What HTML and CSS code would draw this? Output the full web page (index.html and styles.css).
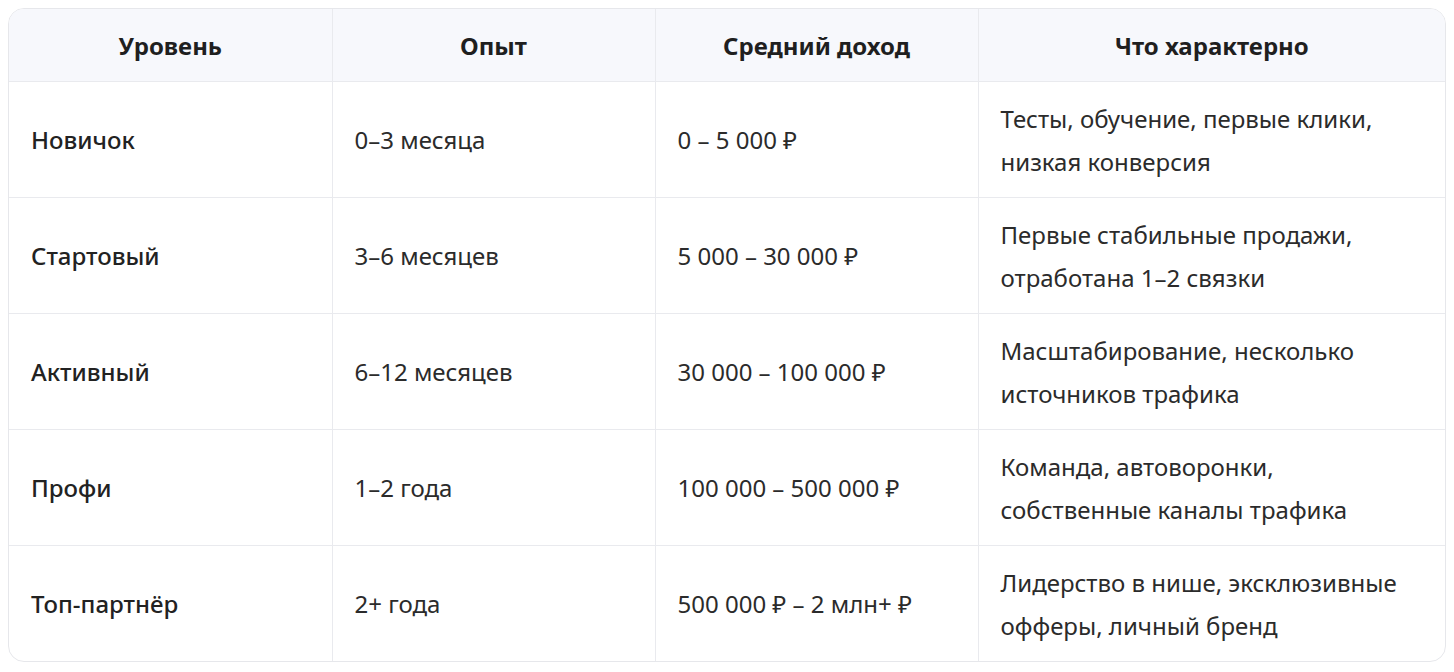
FILE: index.html
```html
<!DOCTYPE html>
<html lang="ru">
<head>
<meta charset="utf-8">
<link rel="stylesheet" href="styles.css">
</head>
<body>
<div class="wrap">
<table class="tbl">
<colgroup>
<col class="c1"><col class="c2"><col class="c3"><col class="c4">
</colgroup>
<thead>
<tr><th>Уровень</th><th>Опыт</th><th>Средний доход</th><th>Что характерно</th></tr>
</thead>
<tbody>
<tr><td class="lvl">Новичок</td><td>0–3 месяца</td><td>0 – 5 000 ₽</td><td>Тесты, обучение, первые клики,<br>низкая конверсия</td></tr>
<tr><td class="lvl">Стартовый</td><td>3–6 месяцев</td><td>5 000 – 30 000 ₽</td><td>Первые стабильные продажи,<br>отработана 1–2 связки</td></tr>
<tr><td class="lvl">Активный</td><td>6–12 месяцев</td><td>30 000 – 100 000 ₽</td><td>Масштабирование, несколько<br>источников трафика</td></tr>
<tr><td class="lvl">Профи</td><td>1–2 года</td><td>100 000 – 500 000 ₽</td><td>Команда, автоворонки,<br>собственные каналы трафика</td></tr>
<tr><td class="lvl">Топ-партнёр</td><td>2+ года</td><td>500 000 ₽ – 2 млн+ ₽</td><td>Лидерство в нише, эксклюзивные<br>офферы, личный бренд</td></tr>
</tbody>
</table>
</div>
</body>
</html>
```
FILE: styles.css
```css
html, body { background: #ffffff; }
body { margin: 8px; font-family: "Noto Sans", "Open Sans", sans-serif; color: #2b2b2b; }
.wrap {
  border: 1px solid #e6e7eb;
  border-radius: 16px;
  overflow: hidden;
  height: 652px;
}
.tbl {
  width: 100%;
  border-collapse: collapse;
  table-layout: fixed;
  font-size: 24px;
}
.c1, .c2, .c3 { width: 323px; }
.c4 { width: auto; }
th {
  background: #f7f8fc;
  font-weight: 700;
  color: #1f1f1f;
  text-align: center;
  height: 72px;
  padding: 0 22px;
  border-bottom: 1px solid #e9eaee;
  border-right: 1px solid #e9eaee;
}
td {
  text-align: left;
  vertical-align: middle;
  line-height: 43px;
  height: 116px;
  padding: 0 22px;
  box-sizing: border-box;
  border-bottom: 1px solid #e9eaee;
  border-right: 1px solid #e9eaee;
}
th:last-child, td:last-child { border-right: none; }
tbody tr:last-child td { border-bottom: none; }
.lvl { font-weight: 500; color: #222; }
```
